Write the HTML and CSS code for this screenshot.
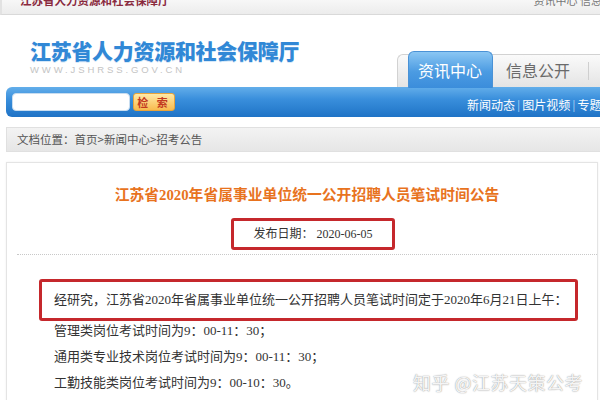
FILE: index.html
```html
<!DOCTYPE html>
<html lang="zh-CN">
<head>
    <meta charset="UTF-8">
    <meta name="viewport" content="width=device-width, initial-scale=1.0">
    <title>江苏省人力资源和社会保障厅</title>
    <link rel="stylesheet" href="styles.css">
</head>
<body>
    <div class="topbar">
        <span class="topbar-name">江苏省人力资源和社会保障厅</span>
        <span class="topbar-links">资讯中心 信息公开</span>
    </div>

    <div class="header">
        <div class="logo">
            <div class="logo-title">江苏省人力资源和社会保障厅</div>
            <div class="logo-url">WWW.JSHRSS.GOV.CN</div>
        </div>
        <div class="tabs">
            <div class="tab tab-active">资讯中心</div>
            <div class="tab">信息公开</div>
            <div class="tab-sep"></div>
        </div>
    </div>

    <div class="navbar">
        <input class="search-input" type="text">
        <button class="search-btn">检 索</button>
        <div class="nav-links">
            <span>新闻动态</span><i>|</i><span>图片视频</span><i>|</i><span>专题报道</span>
        </div>
    </div>

    <div class="crumbs">文档位置：首页&gt;新闻中心&gt;招考公告</div>

    <div class="article">
        <h1 class="article-title">江苏省2020年省属事业单位统一公开招聘人员笔试时间公告</h1>
        <div class="date-row">
            <div class="date-box">发布日期：&nbsp;2020-06-05</div>
        </div>
        <div class="divider"></div>
        <div class="article-body">
            <p class="lead">经研究，江苏省2020年省属事业单位统一公开招聘人员笔试时间定于2020年6月21日上午：</p>
            <p>管理类岗位考试时间为9：00-11：30；</p>
            <p>通用类专业技术岗位考试时间为9：00-11：30；</p>
            <p>工勤技能类岗位考试时间为9：00-10：30。</p>
        </div>
    </div>

    <!-- watermark -->
    <div class="watermark">知乎 @江苏天策公考</div>
</body>
</html>
```

FILE: styles.css
```css
:root {
    --blue: #2f86d6;
    --orange: #e8731e;
    --red-box: #c5282c;
    --font-sans: "Noto Sans CJK SC", "Noto Sans", sans-serif;
    --font-body: "Liberation Serif", "Noto Sans CJK SC", serif;
}
body {
    margin: 0;
    width: 600px;
    height: 400px;
    overflow: hidden;
    position: relative;
    background: #fff;
    font-family: var(--font-sans);
    color: #333;
}
.topbar {
    height: 15px;
    overflow: hidden;
    display: flex;
    justify-content: space-between;
    background: linear-gradient(#f7f7f7, #ececec);
    border-bottom: 1px solid #d9d9d9;
    border-left: 2px solid #e2e2e2;
    box-sizing: border-box;
}
.topbar-name {
    margin: -7px 0 0 18px;
    font-size: 11.5px;
    line-height: 14px;
    font-weight: bold;
    color: #8a2a3e;
}
.topbar-links {
    margin: -7px -24px 0 0;
    font-size: 11px;
    line-height: 14px;
    color: #777;
}
.header {
    height: 72px;
    display: flex;
    align-items: flex-end;
}
.logo {
    align-self: flex-start;
    padding: 22px 0 0 30px;
}
.logo-title {
    font-size: 21px;
    line-height: 26px;
    font-weight: 900;
    color: #3188d6;
    letter-spacing: -0.3px;
    text-shadow: 0 1px 0 #d6e8f8;
}
.logo-url {
    margin-top: 2px;
    font-family: "Liberation Sans", sans-serif;
    font-size: 9.5px;
    line-height: 10px;
    letter-spacing: 2.9px;
    color: #c4c4c4;
}
.tabs {
    margin-left: auto;
    width: 203px;
    height: 33px;
    box-sizing: border-box;
    display: flex;
    align-items: flex-end;
    padding-left: 10px;
    background: linear-gradient(#fafafa, #e4e4e4);
    border: 1px solid #d2d2d2;
    border-right: 0;
    border-bottom: 0;
    border-radius: 6px 0 0 0;
}
.tab {
    flex-shrink: 0;
    height: 32px;
    padding: 0 14px 0 13px;
    font-size: 16px;
    line-height: 30px;
    color: #6a6a6a;
}
.tab-active {
    height: 37px;
    width: 85px;
    box-sizing: border-box;
    padding: 0 0 0 9px;
    margin-bottom: -1px;
    line-height: 36px;
    color: #fff;
    background: linear-gradient(#8ac6f3, #4b9be2 55%, #3b8ddb);
    border: 1px solid #4a92d6;
    border-bottom: 0;
    border-radius: 6px 6px 0 0;
}
.tab-sep {
    width: 1px;
    height: 18px;
    margin: 0 0 7px 4px;
    background: #cfcfcf;
    flex-shrink: 0;
}
.navbar {
    margin-left: 6px;
    height: 30px;
    display: flex;
    align-items: center;
    background: linear-gradient(#63aeea, #3a8fdc 40%, #1f73c6);
    border-radius: 6px 0 0 6px;
}
.search-input {
    margin: 0 0 0 6px;
    width: 118px;
    height: 18px;
    box-sizing: border-box;
    border: 1px solid #c8ddf0;
    border-radius: 4px;
    background: #fff;
    padding: 0;
}
.search-btn {
    margin-left: 3px;
    width: 42px;
    height: 18px;
    padding: 0;
    border: 1px solid #e9a43a;
    border-radius: 3px;
    background: linear-gradient(#ffe9a6, #f8bb4e);
    font-family: var(--font-sans);
    font-size: 11px;
    line-height: 16px;
    font-weight: bold;
    letter-spacing: 3px;
    color: #c3391f;
}
.nav-links {
    margin-left: auto;
    flex-shrink: 0;
    width: 133px;
    overflow: hidden;
    white-space: nowrap;
    padding-top: 6px;
    font-size: 12px;
    line-height: 14px;
    color: #fff;
}
.nav-links i {
    font-style: normal;
    margin: 0 2px;
    color: #a9d1f5;
}
.crumbs {
    margin: 10px 0 0 6px;
    height: 25px;
    box-sizing: border-box;
    padding-left: 10px;
    background: linear-gradient(#f3f3f3, #e6e6e6);
    border: 1px solid #e0e0e0;
    border-right: 0;
    font-size: 11.5px;
    line-height: 23px;
    color: #555;
}
.article {
    margin: 10px 2px 0 6px;
    height: 300px;
    border: 1px solid #e4e4e4;
    box-shadow: 0 0 2px #f0f0f0;
}
.article-title {
    margin: 22px 0 0;
    text-align: center;
    padding-left: 10px;
    font-family: var(--font-body);
    font-size: 14.8px;
    line-height: 20px;
    font-weight: bold;
    color: var(--orange);
}
.date-row {
    display: flex;
    justify-content: center;
    padding-left: 22px;
    margin-top: 13px;
}
.date-box {
    width: 164px;
    height: 32px;
    box-sizing: border-box;
    border: 3px solid var(--red-box);
    border-radius: 3px;
    text-align: center;
    font-family: var(--font-body);
    font-size: 12px;
    line-height: 26px;
    color: #333;
}
.divider {
    margin: 4px 0 0 10px;
    border-top: 1px dotted #c8c8c8;
}
.article-body {
    padding: 24px 19px 0 32px;
    font-family: var(--font-body);
    font-size: 13px;
    color: #333;
}
.article-body p {
    margin: 0;
    padding-left: 15px;
    line-height: 26px;
}
.article-body .lead {
    height: 42px;
    box-sizing: border-box;
    padding-left: 12px;
    border: 3px solid var(--red-box);
    border-radius: 3px;
    line-height: 36px;
    margin-bottom: -3px;
}
.watermark {
    position: absolute;
    right: 17px;
    bottom: 6px;
    font-size: 18px;
    line-height: 24px;
    color: rgba(255, 255, 255, 0.92);
    text-shadow: 0 0 1px rgba(0, 0, 0, 0.4), 0 0 2px rgba(0, 0, 0, 0.18);
    letter-spacing: 0.5px;
}
```
